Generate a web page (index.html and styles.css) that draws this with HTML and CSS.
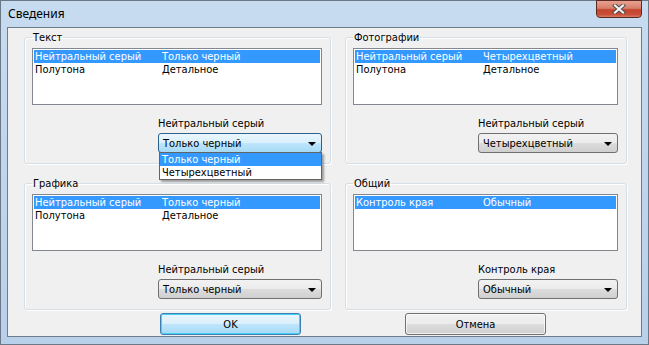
FILE: index.html
```html
<!DOCTYPE html>
<html lang="ru">
<head>
    <meta charset="UTF-8">
    <title>Сведения</title>
    <link rel="stylesheet" href="styles.css">
</head>
<body>
    <div class="window">
        <div class="titlebar">
            <span class="title">Сведения</span>
            <button class="close">
                <svg width="14" height="10" viewBox="0 0 14 10">
                    <path d="M3 1.5 L11 8.5 M11 1.5 L3 8.5" stroke="#4a4a4a" stroke-width="4" stroke-linecap="square"/>
                    <path d="M3 1.5 L11 8.5 M11 1.5 L3 8.5" stroke="#f4f4f4" stroke-width="2.2" stroke-linecap="square"/>
                </svg>
            </button>
        </div>
        <div class="client">
            <div class="groups">
                <fieldset class="group">
                    <legend>Текст</legend>
                    <div class="listbox">
                        <div class="row selected"><span>Нейтральный серый</span><span>Только черный</span></div>
                        <div class="row"><span>Полутона</span><span>Детальное</span></div>
                    </div>
                    <div class="field wide">
                        <div class="label">Нейтральный серый</div>
                        <div class="combo open">
                            <span>Только черный</span><i class="arrow"></i>
                            <div class="popup">
                                <div class="item selected">Только черный</div>
                                <div class="item">Четырехцветный</div>
                            </div>
                        </div>
                    </div>
                </fieldset>
                <fieldset class="group">
                    <legend>Фотографии</legend>
                    <div class="listbox">
                        <div class="row selected"><span>Нейтральный серый</span><span>Четырехцветный</span></div>
                        <div class="row"><span>Полутона</span><span>Детальное</span></div>
                    </div>
                    <div class="field">
                        <div class="label">Нейтральный серый</div>
                        <div class="combo"><span>Четырехцветный</span><i class="arrow"></i></div>
                    </div>
                </fieldset>
                <fieldset class="group">
                    <legend>Графика</legend>
                    <div class="listbox">
                        <div class="row selected"><span>Нейтральный серый</span><span>Только черный</span></div>
                        <div class="row"><span>Полутона</span><span>Детальное</span></div>
                    </div>
                    <div class="field wide">
                        <div class="label">Нейтральный серый</div>
                        <div class="combo"><span>Только черный</span><i class="arrow"></i></div>
                    </div>
                </fieldset>
                <fieldset class="group">
                    <legend>Общий</legend>
                    <div class="listbox">
                        <div class="row selected"><span>Контроль края</span><span>Обычный</span></div>
                    </div>
                    <div class="field">
                        <div class="label">Контроль края</div>
                        <div class="combo"><span>Обычный</span><i class="arrow"></i></div>
                    </div>
                </fieldset>
            </div>
            <div class="buttons">
                <button class="btn default">OK</button>
                <button class="btn">Отмена</button>
            </div>
        </div>
    </div>
</body>
</html>
```

FILE: styles.css
```css
*{
    box-sizing: border-box;
}
html, body{
    margin: 0;
}
body{
    width: 649px; height: 345px;
    font: 11px/13px "DejaVu Sans Condensed", "DejaVu Sans", sans-serif;
    font-stretch: condensed;
    color: #000;
    background: #fff;
}
.window{
    width: 649px; height: 345px;
    border: 1px solid #6a7888;
    padding: 0 6px 7px;
    background: linear-gradient(#c7dbf0, #b8d0ea);
    display: flex; flex-direction: column;
}
.titlebar{
    height: 26px;
    display: flex; align-items: flex-start;
}
.title{
    font: 12px/14px "Noto Sans", sans-serif;
    margin: 6px 0 0 1px;
}
.close{
    margin: -1px 0 0 auto;
    width: 46px; height: 18px;
    padding: 0;
    border: 1px solid #5c2a22;
    border-radius: 0 0 4px 4px;
    background: linear-gradient(#e7a190, #d7806b 45%, #c4432d 55%, #c9503a 85%, #d97a62);
    display: flex; align-items: center; justify-content: center;
}
.client{
    flex: 1;
    border: 1px solid #6f7d8b;
    background: #f0f0f0;
    padding: 3px 0 0 16px;
}
.groups{
    display: grid;
    grid-template-columns: 307px 282px;
    column-gap: 14px; row-gap: 13px;
}
.group{
    margin: 0;
    min-width: 0;
    padding: 4px 8px 10px 7px;
    border: 1px solid #d5dfe5;
    border-radius: 3px;
    box-shadow: inset 1px 1px #fff, 1px 1px #fff;
}
legend{
    padding: 0 1px;
    line-height: 13px;
}
.listbox{
    height: 57px;
    border: 1px solid #828790;
    background: #fff;
    padding: 1px;
}
.row{
    display: grid;
    grid-template-columns: 127px 1fr;
    height: 13px;
    padding-left: 1px;
    white-space: nowrap;
}
.selected{
    background: #3399ff; color: #fff;
}
.field{
    width: 140px;
    margin: 12px 0 0 auto;
}
.field.wide{
    width: 164px;
}
.label{
    margin-bottom: 3px;
}
.combo{
    position: relative;
    height: 20px;
    border: 1px solid #707070;
    border-radius: 3px;
    padding-left: 4px;
    background: linear-gradient(#f2f2f2, #ebebeb 50%, #dddddd 50%, #cfcfcf);
    display: flex; align-items: center;
}
.combo.open{
    border-color: #2c628b;
    background: linear-gradient(#eaf6fd, #d9f0fc 50%, #bee6fd 50%, #a7d9f5);
}
.arrow{
    margin: 1px 5px 0 auto;
    width: 0; height: 0;
    border-left: 4px solid transparent;
    border-right: 4px solid transparent;
    border-top: 4px solid #000;
}
.popup{
    position: absolute; left: 0; right: -1px; top: 100%;
    border: 1px solid #646464;
    background: #fff;
    box-shadow: 2px 2px 2px rgba(0,0,0,0.35);
}
.item{
    height: 13px;
    padding-left: 2px;
}
.buttons{
    display: flex;
    gap: 104px;
    margin-top: 3px;
    padding-left: 136px;
}
.btn{
    width: 141px; height: 22px;
    font: inherit;
    color: #000;
    border: 1px solid #707070;
    border-radius: 3px;
    background: linear-gradient(#f2f2f2, #ebebeb 50%, #dddddd 50%, #cfcfcf);
    box-shadow: inset 0 0 0 1px rgba(255,255,255,0.7);
}
.btn.default{
    border-color: #3c7fb1;
    background: linear-gradient(#eaf6fd, #d9f0fc 50%, #bee6fd 50%, #a7d9f5);
    box-shadow: inset 0 0 0 1px #48d0f8;
}
```
